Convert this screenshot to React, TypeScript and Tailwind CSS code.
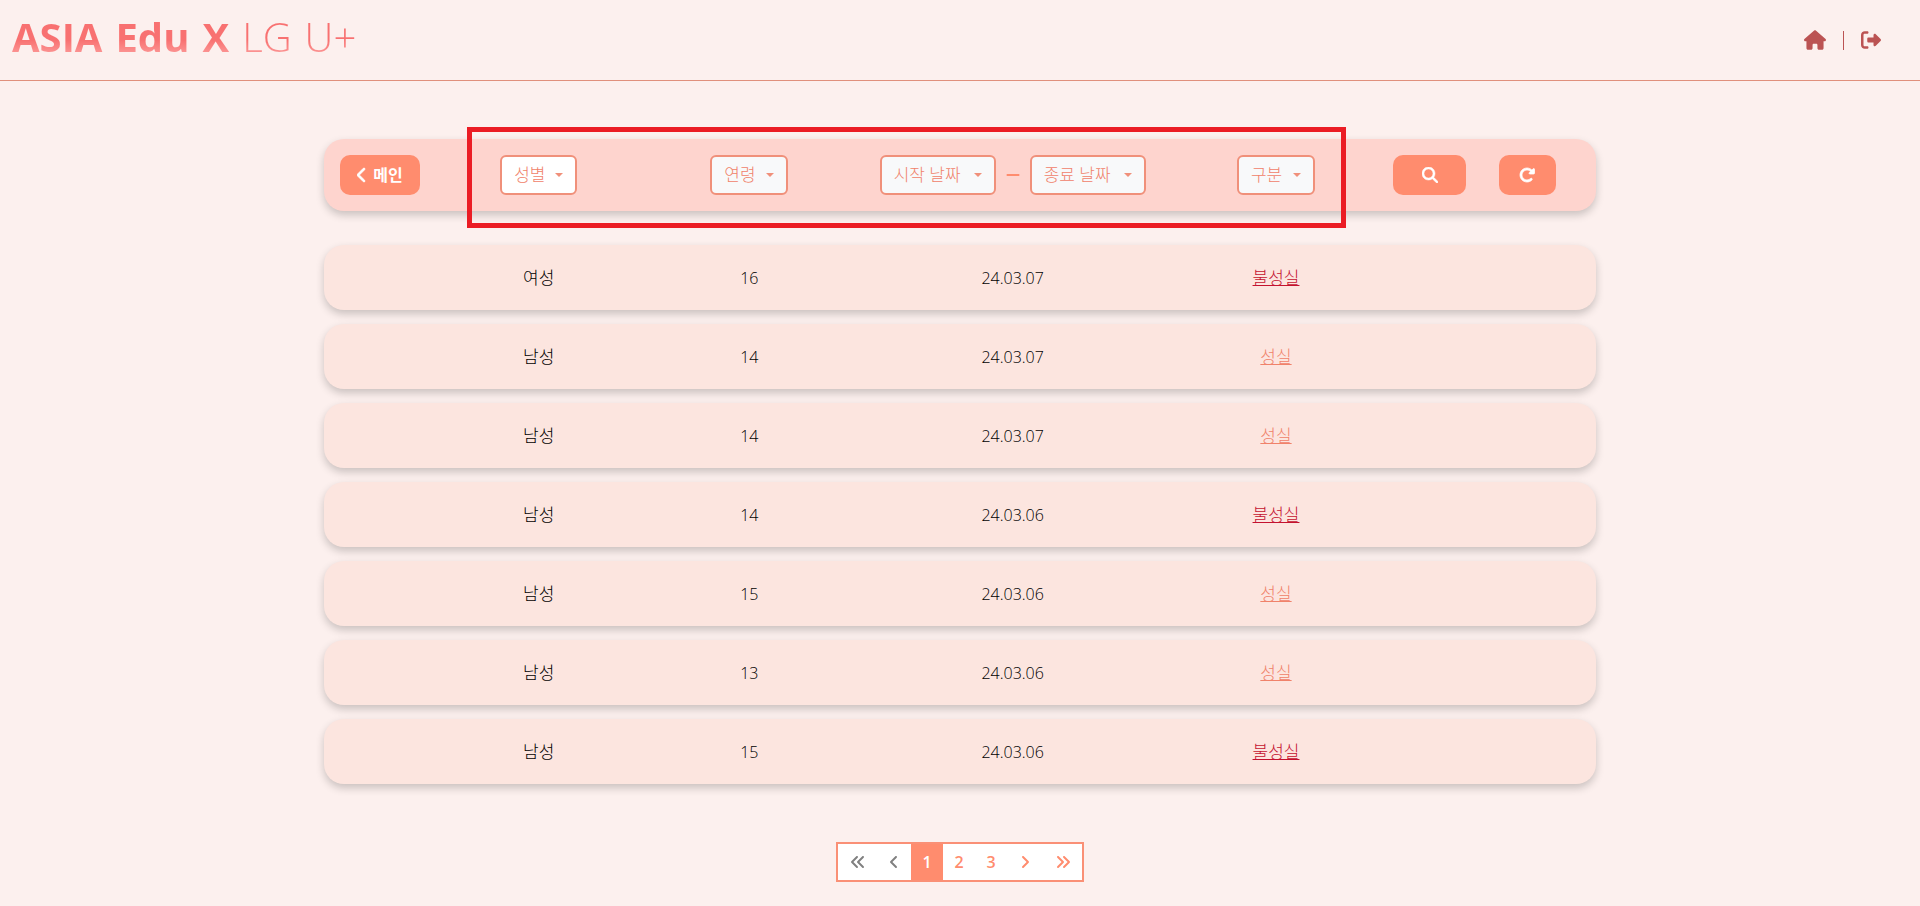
import {
  FaAngleLeft,
  FaAngleRight,
  FaAnglesLeft,
  FaAnglesRight,
  FaChevronLeft,
  FaHouse,
  FaMagnifyingGlass,
  FaMinus,
  FaRightFromBracket,
  FaRotateRight,
} from 'react-icons/fa6';

type Filter = { label: string; options: string[]; width: string; tone: string };

const gender: Filter = { label: '성별', options: ['여성', '남성'], width: 'w-[77px]', tone: 'bg-white' };
const age: Filter = { label: '연령', options: ['13', '14', '15', '16'], width: 'w-[78px]', tone: 'bg-[#f8f9fa]' };
const startDate: Filter = { label: '시작 날짜', options: ['24.03.06', '24.03.07'], width: 'w-[116px]', tone: 'bg-[#f8f9fa]' };
const endDate: Filter = { label: '종료 날짜', options: ['24.03.06', '24.03.07'], width: 'w-[116px]', tone: 'bg-[#f8f9fa]' };
const attitude: Filter = { label: '구분', options: ['성실', '불성실'], width: 'w-[78px]', tone: 'bg-[#f8f9fa]' };

const rows = [
  { gender: '여성', age: 16, date: '24.03.07', sincere: false },
  { gender: '남성', age: 14, date: '24.03.07', sincere: true },
  { gender: '남성', age: 14, date: '24.03.07', sincere: true },
  { gender: '남성', age: 14, date: '24.03.06', sincere: false },
  { gender: '남성', age: 15, date: '24.03.06', sincere: true },
  { gender: '남성', age: 13, date: '24.03.06', sincere: true },
  { gender: '남성', age: 15, date: '24.03.06', sincere: false },
];

function FilterSelect({ label, options, width, tone }: Filter) {
  return (
    <div className="relative">
      <select
        aria-label={label}
        defaultValue=""
        className={`block h-10 appearance-none rounded-md border-2 border-[#f0907a] pl-3 text-[17px] font-light text-[#f0826a] ${width} ${tone}`}
      >
        <option value="">{label}</option>
        {options.map((option) => (
          <option key={option}>{option}</option>
        ))}
      </select>
      <svg
        viewBox="0 0 8 4"
        aria-hidden="true"
        className="pointer-events-none absolute top-[18px] right-[14px] h-1 w-2 fill-[#f0907a]"
      >
        <path d="M0 0h8L4 4z" />
      </svg>
    </div>
  );
}

export default function App() {
  return (
    <div className="min-h-screen bg-[#fcf0ee] font-['Open_Sans','Noto_Sans_CJK_KR',sans-serif] text-base text-black">
      <header className="flex h-[81px] items-center justify-between border-b border-[#e0907c] pr-[39px] pl-3">
        <h1 className="flex gap-[13px] bg-linear-to-b from-[#f87171] from-50% to-[#fca5a5] to-80% bg-clip-text pb-1.5 text-[40px] leading-[60px] font-light text-transparent">
          <span className="font-bold">ASIA</span>
          <span className="font-bold">Edu</span>
          <span className="font-bold">X</span>
          <span>LG</span>
          <span>U+</span>
        </h1>
        <nav className="flex items-center gap-[17px] text-xl text-[#bb5353]">
          <a href="#home" aria-label="홈">
            <FaHouse className="h-5 w-[22px]" />
          </a>
          <span className="h-[19px] w-px bg-[#bb5353]" />
          <a href="#logout" aria-label="로그아웃">
            <FaRightFromBracket />
          </a>
        </nav>
      </header>

      <main className="mx-auto max-w-[1272px] pt-[58px] pb-6">
        <section className="relative grid h-[72px] grid-cols-12 items-center rounded-[20px] bg-[#fed4ce] px-1 shadow-[0_4px_8px_rgba(0,0,0,0.2)]">
          <div className="pl-3">
            <button className="flex h-10 w-20 items-center justify-center gap-1.5 rounded-[10px] bg-[#ff8c6e] font-bold text-white">
              <FaChevronLeft strokeWidth={24} className="w-2.5" /> 메인
            </button>
          </div>
          <div className="col-span-2 flex justify-center">
            <FilterSelect {...gender} />
          </div>
          <div className="col-span-2 flex justify-center">
            <FilterSelect {...age} />
          </div>
          <div className="col-span-3 flex items-center justify-center gap-[9px] text-[#ff8c6e]">
            <FilterSelect {...startDate} />
            <FaMinus />
            <FilterSelect {...endDate} />
          </div>
          <div className="col-span-2 flex justify-center">
            <FilterSelect {...attitude} />
          </div>
          <div className="pl-3">
            <button
              aria-label="검색"
              className="flex h-10 w-[73px] items-center justify-center rounded-[10px] bg-[#ff8c6e] text-white"
            >
              <FaMagnifyingGlass strokeWidth={16} />
            </button>
          </div>
          <div className="pl-3">
            <button
              aria-label="새로고침"
              className="flex h-10 w-[57px] items-center justify-center rounded-[10px] bg-[#ff8c6e] text-white"
            >
              <FaRotateRight strokeWidth={24} />
            </button>
          </div>
          <div className="pointer-events-none absolute -top-3 right-[250px] -bottom-[17px] left-[143px] border-5 border-[#eb1c24]" />
        </section>

        <table className="mt-[34px] block">
          <tbody className="flex flex-col gap-[14px]">
            {rows.map((row, index) => (
              <tr
                key={index}
                className="grid h-[65px] grid-cols-12 items-center rounded-[20px] bg-[#fce5df] px-1 text-center font-light shadow-[0_4px_8px_rgba(0,0,0,0.2)]"
              >
                <td className="col-span-2 col-start-2 text-[17px]">{row.gender}</td>
                <td className="col-span-2">{row.age}</td>
                <td className="col-span-3">{row.date}</td>
                <td className="col-span-2 text-[17px]">
                  <a href="#detail" className={row.sincere ? 'text-[#f0826a] underline' : 'text-[#c4122f] underline'}>
                    {row.sincere ? '성실' : '불성실'}
                  </a>
                </td>
              </tr>
            ))}
          </tbody>
        </table>

        <nav
          aria-label="페이지"
          className="mx-auto mt-[58px] flex h-10 w-fit border-2 border-[#fa9076] bg-white font-semibold text-[#ff8c6e]"
        >
          <button disabled aria-label="처음" className="flex w-[39px] items-center justify-center text-[#808080]">
            <FaAnglesLeft />
          </button>
          <button disabled aria-label="이전" className="flex w-[34px] items-center justify-center text-[#808080]">
            <FaAngleLeft />
          </button>
          <button aria-current="page" className="w-8 bg-[#ff8c6e] text-white">
            1
          </button>
          <button className="w-8">2</button>
          <button className="w-8">3</button>
          <button aria-label="다음" className="flex w-9 items-center justify-center">
            <FaAngleRight />
          </button>
          <button aria-label="마지막" className="flex w-[39px] items-center justify-center">
            <FaAnglesRight />
          </button>
        </nav>
      </main>
    </div>
  );
}
